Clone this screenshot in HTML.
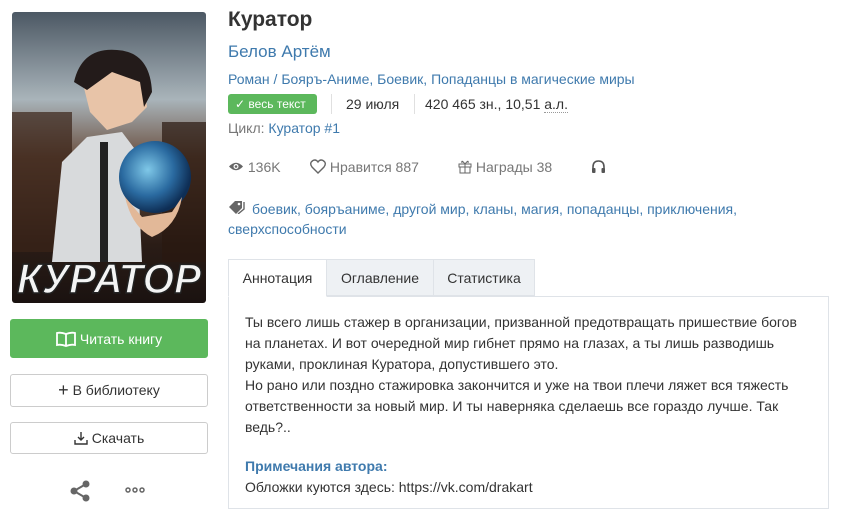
<!DOCTYPE html>
<html><head><meta charset="utf-8"><style>
*{margin:0;padding:0;box-sizing:border-box}
body{width:843px;height:526px;background:#fff;font-family:"Liberation Sans","DejaVu Sans",sans-serif;color:#333;position:relative;overflow:hidden;font-size:14px}
.a{position:absolute;white-space:nowrap}
.lnk{color:#3f7aad}
.btn{position:absolute;left:10px;width:198px;border:1px solid #ccc;border-radius:3px;text-align:center;font-size:14px;color:#333}
.g{color:#777}
</style></head><body>
<svg class="a" style="left:12px;top:12px" width="194" height="291" viewBox="0 0 194 291">
<defs>
<linearGradient id="bg" x1="0" y1="0" x2="0" y2="1"><stop offset="0" stop-color="#4c5864"/><stop offset=".3" stop-color="#a9b4ba"/><stop offset=".5" stop-color="#6b5040"/><stop offset=".8" stop-color="#2a1c16"/><stop offset="1" stop-color="#1a1210"/></linearGradient>
<radialGradient id="gl" cx=".4" cy=".4" r=".6"><stop offset="0" stop-color="#7fc8e8"/><stop offset=".6" stop-color="#2a6aa0"/><stop offset="1" stop-color="#0e2e55"/></radialGradient>
</defs>
<rect width="194" height="291" rx="3" fill="url(#bg)"/>
<rect x="0" y="100" width="60" height="140" fill="#3a2418" opacity=".7"/>
<rect x="150" y="110" width="44" height="140" fill="#2a1810" opacity=".7"/>
<path d="M40 250 L50 150 L75 125 L110 120 L125 140 L130 250 Z" fill="#d8dadc"/>
<path d="M68 60 Q95 30 130 55 L135 95 L120 110 L95 118 L78 100 Z" fill="#e8c4a8"/>
<path d="M62 70 Q70 35 105 38 Q138 40 140 80 L132 95 L128 70 L100 60 L75 78 Z" fill="#231b1a"/>
<rect x="88" y="130" width="8" height="120" fill="#222"/>
<circle cx="143" cy="165" r="36" fill="url(#gl)"/>
<path d="M113 185 Q120 215 140 225 Q165 215 170 185 L160 200 L130 205 Z" fill="#e2b898"/>
<text x="97" y="281" text-anchor="middle" font-family="Liberation Sans" font-weight="bold" font-style="italic" font-size="42" fill="#f4f4f4" stroke="#222" stroke-width="1.5" textLength="184" lengthAdjust="spacingAndGlyphs">КУРАТОР</text>
</svg>
<div class="btn" style="top:319px;height:39px;line-height:39px;background:#5cb85c;border-color:#5cb85c;color:#fff">
<svg width="20" height="16" viewBox="0 0 20 16" style="vertical-align:-3px;margin-right:4px"><path d="M10 3 Q5 1 1 2 V14 Q5 13 10 15 Q15 13 19 14 V2 Q15 1 10 3 Z M10 3 V15" fill="none" stroke="#fff" stroke-width="1.8"/></svg>Читать книгу</div>
<div class="btn" style="top:374px;height:33px;line-height:31px"><span style="font-size:18px;vertical-align:-1px">+</span> В библиотеку</div>
<div class="btn" style="top:422px;height:32px;line-height:30px"><svg width="14" height="14" viewBox="0 0 14 14" style="vertical-align:-2px;margin-right:4px"><path d="M7 1V9M4 6L7 9L10 6M1 9V13H13V9" fill="none" stroke="#333" stroke-width="1.4"/></svg>Скачать</div>
<svg class="a" style="left:70px;top:480px" width="20" height="22" viewBox="0 0 20 22"><circle cx="4" cy="11" r="3.5" fill="#666"/><circle cx="16" cy="4" r="3.5" fill="#666"/><circle cx="16" cy="18" r="3.5" fill="#666"/><path d="M4 11L16 4M4 11L16 18" stroke="#666" stroke-width="2"/></svg>
<svg class="a" style="left:125px;top:487px" width="20" height="6"><circle cx="3" cy="3" r="2" fill="none" stroke="#666" stroke-width="1.5"/><circle cx="10" cy="3" r="2" fill="none" stroke="#666" stroke-width="1.5"/><circle cx="17" cy="3" r="2" fill="none" stroke="#666" stroke-width="1.5"/></svg>

<div class="a" style="left:228px;top:8px;font-size:21px;font-weight:bold;color:#333">Куратор</div>
<div class="a lnk" style="left:228px;top:42px;font-size:17px">Белов Артём</div>
<div class="a lnk" style="left:228px;top:71px;font-size:14px">Роман / Бояръ-Аниме, Боевик, Попаданцы в магические миры</div>
<div class="a" style="left:228px;top:94px;width:89px;height:20px;background:#5cb85c;border-radius:3px;color:#fff;font-size:12px;line-height:20px;padding-left:7px">✓ весь текст</div>
<div class="a" style="left:331px;top:94px;width:1px;height:20px;background:#e0e0e0"></div>
<div class="a" style="left:346px;top:96px;font-size:14px">29 июля</div>
<div class="a" style="left:414px;top:94px;width:1px;height:20px;background:#e0e0e0"></div>
<div class="a" style="left:425px;top:96px;font-size:14px">420 465 зн., 10,51 <span style="border-bottom:1px dotted #999">а.л.</span></div>
<div class="a" style="left:228px;top:120px;font-size:14px"><span class="g">Цикл: </span><span class="lnk">Куратор #1</span></div>
<div class="a g" style="left:228px;top:159px;font-size:14px">
<svg width="16" height="11" viewBox="0 0 16 11" style="vertical-align:0"><path d="M1 5.5Q8 -2 15 5.5Q8 13 1 5.5Z" fill="#666"/><circle cx="8" cy="5.5" r="2.5" fill="#fff"/><circle cx="8" cy="5.5" r="1.3" fill="#666"/></svg> 136K</div>
<div class="a g" style="left:310px;top:159px;font-size:14px"><svg width="16" height="15" viewBox="0 0 16 15" style="vertical-align:-2px"><path d="M8 14L2 8Q-1 4 3 1.5Q6 0 8 3Q10 0 13 1.5Q17 4 14 8Z" fill="none" stroke="#666" stroke-width="1.4"/></svg> Нравится 887</div>
<div class="a g" style="left:458px;top:159px;font-size:14px"><svg width="14" height="15" viewBox="0 0 14 15" style="vertical-align:-2px"><rect x="1" y="5" width="12" height="3" fill="none" stroke="#666"/><rect x="2" y="8" width="10" height="6" fill="none" stroke="#666"/><path d="M7 5V14M7 5Q3 0 4 4M7 5Q11 0 10 4" fill="none" stroke="#666"/></svg> Награды 38</div>
<svg class="a" style="left:591px;top:160px" width="15" height="14" viewBox="0 0 15 14"><path d="M2 10V7Q2 1 7.5 1Q13 1 13 7V10" fill="none" stroke="#555" stroke-width="1.6"/><rect x="1" y="8" width="3.5" height="5" rx="1" fill="#555"/><rect x="10.5" y="8" width="3.5" height="5" rx="1" fill="#555"/></svg>
<svg class="a" style="left:228px;top:200px" width="18" height="14" viewBox="0 0 18 14"><path d="M1 7L7 1H14V8L8 14Z" fill="#666"/><circle cx="11" cy="4" r="1.3" fill="#fff"/><path d="M16 2V9L10 14" fill="none" stroke="#666" stroke-width="1.4"/></svg>
<div class="a lnk" style="left:252px;top:201px;font-size:14px">боевик, бояръаниме, другой мир, кланы, магия, попаданцы, приключения,</div>
<div class="a lnk" style="left:228px;top:221px;font-size:14px">сверхспособности</div>

<div class="a" style="left:228px;top:296px;width:601px;height:213px;border:1px solid #dfe3e8"></div>
<div class="a" style="left:228px;top:259px;width:99px;height:38px;border:1px solid #dfe3e8;border-bottom:1px solid #fff;background:#fff;text-align:center;line-height:36px;font-size:14px">Аннотация</div>
<div class="a" style="left:327px;top:259px;width:107px;height:37px;border:1px solid #dfe3e8;border-left:none;background:#eef1f4;text-align:center;line-height:36px;font-size:14px">Оглавление</div>
<div class="a" style="left:434px;top:259px;width:101px;height:37px;border:1px solid #dfe3e8;border-left:none;background:#eef1f4;text-align:center;line-height:36px;font-size:14px">Статистика</div>
<div class="a" style="left:245px;top:312px;font-size:14px;line-height:21px">Ты всего лишь стажер в организации, призванной предотвращать пришествие богов<br>на планетах. И вот очередной мир гибнет прямо на глазах, а ты лишь разводишь<br>руками, проклиная Куратора, допустившего это.<br>Но рано или поздно стажировка закончится и уже на твои плечи ляжет вся тяжесть<br>ответственности за новый мир. И ты наверняка сделаешь все гораздо лучше. Так<br>ведь?..</div>
<div class="a lnk" style="left:245px;top:458px;font-size:14px;font-weight:bold">Примечания автора:</div>
<div class="a" style="left:245px;top:479px;font-size:14px">Обложки куются здесь: https://vk.com/drakart</div>
</body></html>
